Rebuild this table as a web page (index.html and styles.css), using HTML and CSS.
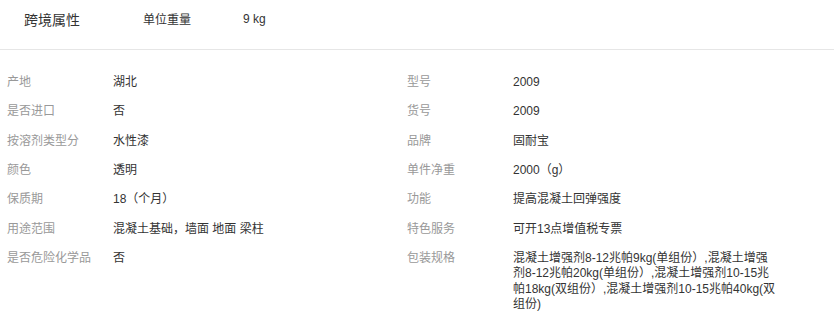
FILE: index.html
```html
<!DOCTYPE html>
<html lang="zh">
<head>
<meta charset="utf-8">
<link rel="stylesheet" href="styles.css">
</head>
<body>
<div class="header">
  <div class="header-title">跨境属性</div>
  <div class="header-label">单位重量</div>
  <div class="header-value">9 kg</div>
</div>
<div class="attrs">
  <div class="col">
    <div class="row"><div class="label">产地</div><div class="value">湖北</div></div>
    <div class="row"><div class="label">是否进口</div><div class="value">否</div></div>
    <div class="row"><div class="label">按溶剂类型分</div><div class="value">水性漆</div></div>
    <div class="row"><div class="label">颜色</div><div class="value">透明</div></div>
    <div class="row"><div class="label">保质期</div><div class="value">18（个月）</div></div>
    <div class="row"><div class="label">用途范围</div><div class="value">混凝土基础，墙面 地面 梁柱</div></div>
    <div class="row"><div class="label">是否危险化学品</div><div class="value">否</div></div>
  </div>
  <div class="col">
    <div class="row"><div class="label">型号</div><div class="value">2009</div></div>
    <div class="row"><div class="label">货号</div><div class="value">2009</div></div>
    <div class="row"><div class="label">品牌</div><div class="value">固耐宝</div></div>
    <div class="row"><div class="label">单件净重</div><div class="value">2000（g）</div></div>
    <div class="row"><div class="label">功能</div><div class="value">提高混凝土回弹强度</div></div>
    <div class="row"><div class="label">特色服务</div><div class="value">可开13点增值税专票</div></div>
    <div class="row"><div class="label">包装规格</div><div class="value">混凝土增强剂8-12兆帕9kg(单组份）,混凝土增强剂8-12兆帕20kg(单组份）,混凝土增强剂10-15兆帕18kg(双组份）,混凝土增强剂10-15兆帕40kg(双组份)</div></div>
  </div>
</div>
</body>
</html>
```

FILE: styles.css
```css
html, body {
  margin: 0;
  padding: 0;
  background: #fff;
}
body {
  font-family: "Liberation Sans", "Noto Sans CJK SC", sans-serif;
  font-size: 12px;
  color: #333;
}
.header {
  display: flex;
  align-items: center;
  height: 50px;
  padding-left: 24px;
  padding-bottom: 12px;
  box-sizing: border-box;
  border-bottom: 1px solid #e6e6e6;
}
.header-title {
  width: 119px;
  font-size: 14px;
  color: #333;
}
.header-label {
  width: 100px;
  color: #333;
}
.header-value {
  color: #333;
}
.attrs {
  display: grid;
  grid-template-columns: 400px 400px;
  padding: 25px 0 0 7px;
}
.col {
  display: flex;
  flex-direction: column;
  gap: 13.83px;
}
.row {
  display: flex;
  line-height: 15.5px;
}
.label {
  width: 106px;
  flex: none;
  color: #999;
}
.value {
  width: 264px;
  color: #333;
}
```
